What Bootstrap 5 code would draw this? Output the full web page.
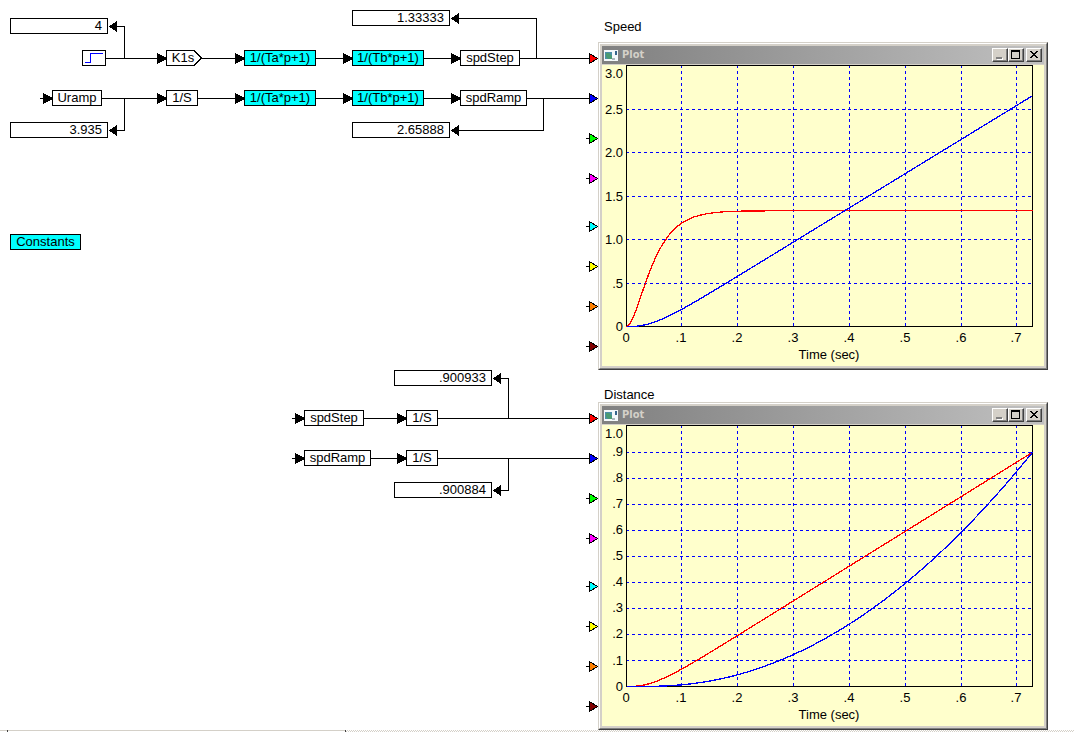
<!DOCTYPE html>
<html lang="en">
<head>
<meta charset="utf-8">
<meta name="viewport" content="width=device-width, initial-scale=1">
<title>Block diagram</title>
<link href="https://cdn.jsdelivr.net/npm/bootstrap@5.3.0/dist/css/bootstrap.min.css" rel="stylesheet">
<style>
  body { font-family: "Liberation Sans", Arial, sans-serif; font-size: 13px; line-height: 14px; color: #000; background: #fff; }
  .board { min-height: 730px; }
  .wires { top: 0; left: 0; pointer-events: none; shape-rendering: crispEdges; }
  .wires .line { fill: none; stroke: #000; }
  .wires .port { stroke: #000; }

  /* diagram nodes, placed on the canvas */
  .node { position: absolute; height: 16px; border: 1px solid #000; background: #fff; text-align: center; white-space: nowrap; }
  .compound { background: #0ff; }
  .readout { width: 98px; padding-right: 5px; text-align: right; }
  .gain { border-color: transparent; background: none; padding-right: 2px; }
  .caption { position: absolute; left: 604px; margin: 0; font-size: 13px; line-height: 16px; font-weight: 400; }
  .scope { position: absolute; left: 598px; width: 450px; }

  .x-a { left: 10px; } .x-step { left: 82px; } .x-uramp { left: 52px; } .x-b { left: 166px; }
  .x-c { left: 244px; } .x-d { left: 352px; } .x-e { left: 460px; }
  .x-f { left: 304px; } .x-g { left: 406px; } .x-h { left: 394px; }
  .y-1 { top: 10px; } .y-2 { top: 18px; } .y-3 { top: 50px; } .y-4 { top: 90px; } .y-5 { top: 122px; }
  .y-6 { top: 234px; } .y-7 { top: 370px; } .y-8 { top: 410px; } .y-9 { top: 450px; } .y-10 { top: 482px; }
  .cap-1 { top: 19px; } .cap-2 { top: 387px; }
  .scope-1 { top: 42px; } .scope-2 { top: 402px; }
  .w-24 { width: 24px; } .w-32 { width: 32px; } .w-36 { width: 36px; } .w-50px { width: 50px; }
  .w-60 { width: 60px; } .w-67 { width: 67px; } .w-72 { width: 72px; } .w-71 { width: 71px; }

  /* plot windows */
  .frame-outer { border: 1px solid; border-color: #d4d0c8 #404040 #404040 #d4d0c8; }
  .frame-inner { border: 1px solid; border-color: #fff #808080 #808080 #fff; background: #d4d0c8; padding: 2px; }
  .titlebar { height: 18px; margin-bottom: 1px; padding: 0 2px; background: linear-gradient(90deg, #808080, #c0c0c0); }
  .titlebar span { font-family: "DejaVu Sans Condensed", "DejaVu Sans", sans-serif; font-size: 11px; font-weight: 700; color: #d4d0c8; }
  .winbtn { width: 16px; height: 14px; padding: 0; border: 1px solid; border-color: #fff #404040 #404040 #fff; border-radius: 0; background: #d4d0c8; box-shadow: inset -1px -1px #808080; line-height: 0; display: block; }
  .winbtn-close { margin-left: 2px; }
  .winbtn svg, .plot { display: block; }
  .plot { background: #ffc; width: 100%; height: auto; }
  .plot text { font-size: 13px; fill: #000; }
  .plot path { shape-rendering: crispEdges; fill: none; }
  .grid-lines { stroke: #00f; stroke-dasharray: 3 3; }
  .plot-frame { stroke: #000; }
  .trace-a { stroke: #f00; stroke-width: 1.3; }
  .trace-b { stroke: #00f; stroke-width: 1.3; }

  /* scroll strip under the canvas */
  .strip { height: 2px; }
  .thumb { width: 346px; border-top: 1px solid #d4d0c8; }
  .tick { width: 1px; height: 2px; margin-top: -1px; background: #404040; }
  .thumb .tick:first-child { margin-left: 7px; }
  .track { background: repeating-conic-gradient(#d4d0c8 0 25%, #fff 0 50%) 0 0 / 2px 2px; }
</style>
<script src="https://cdn.jsdelivr.net/npm/bootstrap@5.3.0/dist/js/bootstrap.bundle.min.js"></script>
</head>
<body class="d-flex flex-column min-vh-100">

<main class="board position-relative flex-grow-1">
  <svg class="wires position-absolute" width="600" height="730" viewBox="0 0 600 730" aria-hidden="true">
    <defs>
      <path id="right" d="M0 0h1v1h2v1h2v1h2v1h2v1h1v1h-1v1h-2v1h-2v1h-2v1h-2v1h-1z"/>
      <path id="left" d="M8 0v11h-1v-1h-1v-1h-2v-1h-1v-1h-2v-1h-1v-1h1v-1h2v-1h1v-1h2v-1h1v-1z"/>
      <path id="port" d="M.5 .5L8.500 5.500L.5 10.500z"/>
    </defs>
    <g class="line">
      <path d="M106 58.500H160M124.500 58V26.500H116M202 58.500H238M316 58.500H346M424 58.500H454M520 58.500H589M536.500 58V18.500H458"/>
      <path d="M40 98.500H46M102 98.500H160M124.500 98V130.500H116M198 98.500H238M316 98.500H346M424 98.500H454M527 98.500H589M543.500 98V130.500H458"/>
      <path d="M292 418.500H298M364 418.500H400M438 418.500H589M508.500 418V378.500H500"/>
      <path d="M292 458.500H298M371 458.500H400M438 458.500H589M508.500 458V490.500H500"/>
      <path d="M586 138.500h3M586 178.500h3M586 226.500h3M586 266.500h3M586 306.500h3M586 346.500h3M586 498.500h3M586 538.500h3M586 586.500h3M586 626.500h3M586 666.500h3M586 706.500h3"/>
      <path fill="#fff" d="M166.500 50.500H194L201.500 58L194 65.500H166.500z"/>
    </g>
    <g>
      <use href="#right" x="157" y="53"/><use href="#right" x="235" y="53"/><use href="#right" x="343" y="53"/><use href="#right" x="451" y="53"/>
      <use href="#right" x="43" y="93"/><use href="#right" x="157" y="93"/><use href="#right" x="235" y="93"/><use href="#right" x="343" y="93"/><use href="#right" x="451" y="93"/>
      <use href="#right" x="295" y="413"/><use href="#right" x="397" y="413"/><use href="#right" x="295" y="453"/><use href="#right" x="397" y="453"/>
      <use href="#left" x="109" y="21"/><use href="#left" x="109" y="125"/><use href="#left" x="451" y="13"/><use href="#left" x="451" y="125"/>
      <use href="#left" x="493" y="373"/><use href="#left" x="493" y="485"/>
    </g>
    <g class="port" id="ports">
      <use href="#port" x="589" y="53" fill="#f00"/><use href="#port" x="589" y="93" fill="#00f"/>
      <use href="#port" x="589" y="133" fill="#0f0"/><use href="#port" x="589" y="173" fill="#f0f"/>
      <use href="#port" x="589" y="221" fill="#0ff"/><use href="#port" x="589" y="261" fill="#ff0"/>
      <use href="#port" x="589" y="301" fill="#ff8000"/><use href="#port" x="589" y="341" fill="#800000"/>
    </g>
    <use class="port" href="#ports" y="360"/>
  </svg>

  <output class="node readout x-a y-2">4</output>
  <div class="node w-24 x-step y-3">
    <svg class="d-block" width="22" height="14" viewBox="0 0 22 14" shape-rendering="crispEdges" aria-label="Step input"><path d="M2 11.500h5.500v-9H20" fill="none" stroke="#00f"/></svg>
  </div>
  <div class="node gain w-36 x-b y-3">K1s</div>
  <div class="node compound w-72 x-c y-3">1/(Ta*p+1)</div>
  <div class="node compound w-72 x-d y-3">1/(Tb*p+1)</div>
  <output class="node readout x-d y-1">1.33333</output>
  <div class="node w-60 x-e y-3">spdStep</div>

  <div class="node w-50px x-uramp y-4">Uramp</div>
  <div class="node w-32 x-b y-4">1/S</div>
  <div class="node compound w-72 x-c y-4">1/(Ta*p+1)</div>
  <div class="node compound w-72 x-d y-4">1/(Tb*p+1)</div>
  <div class="node w-67 x-e y-4">spdRamp</div>
  <output class="node readout x-a y-5">3.935</output>
  <output class="node readout x-d y-5">2.65888</output>

  <div class="node compound w-71 x-a y-6">Constants</div>

  <output class="node readout x-h y-7">.900933</output>
  <div class="node w-60 x-f y-8">spdStep</div>
  <div class="node w-32 x-g y-8">1/S</div>
  <div class="node w-67 x-f y-9">spdRamp</div>
  <div class="node w-32 x-g y-9">1/S</div>
  <output class="node readout x-h y-10">.900884</output>

  <h2 class="caption cap-1">Speed</h2>
  <section class="scope scope-1 frame-outer"><div class="frame-inner">
    <header class="titlebar d-flex align-items-center">
      <svg class="me-1" width="14" height="11" viewBox="0 0 14 11" aria-hidden="true"><path fill="#f4f8fa" d="M0 0h14v11H0z"/><path fill="#4b8fa8" d="M1 2h7v7H1z"/><path fill="#4a9a72" d="M2 3h3l3 3v3H4L2 7z"/><path fill="#35658c" d="M11 1h2v4h-2z"/><path fill="#aab7bd" d="M8 8h3v2H8z"/></svg>
      <span>Plot</span>
      <div class="d-flex ms-auto">
        <button type="button" class="winbtn" aria-label="Minimize"><svg width="14" height="12"><path fill="#fff" d="M4 9h6v2H4z"/><path fill="#808080" d="M3 8h6v2H3z"/></svg></button>
        <button type="button" class="winbtn" aria-label="Maximize"><svg width="14" height="12"><path fill-rule="evenodd" d="M2 1h9v9H2zM3 3v6h7V3z"/></svg></button>
        <button type="button" class="winbtn winbtn-close" aria-label="Close"><svg width="14" height="12" shape-rendering="crispEdges"><path d="M3 2h2v1h1v1h2V3h1V2h2v1h-1v1H9v1H8v1h1v1h1v1h1v1H9V8H8V7H6v1H5v1H3V8h1V7h1V6h1V5H5V4H4V3H3z"/></svg></button>
      </div>
    </header>
    <svg class="plot" viewBox="0 0 442 301" aria-label="Speed against time">
      <path class="grid-lines" d="M24 44.500h406M24 87.500h406M24 131.500h406M24 174.500h406M24 218.500h406M79.500 0v261M135.500 0v261M191.500 0v261M247.500 0v261M303.500 0v261M359.500 0v261M414.500 0v261"/>
      <path class="plot-frame" d="M24.500 .5h406v261h-406z"/>
      <path id="speedStep" class="trace-a"/><path id="speedRamp" class="trace-b"/>
      <g text-anchor="end">
        <text x="21" y="13">3.0</text><text x="21" y="49">2.5</text><text x="21" y="92">2.0</text><text x="21" y="136">1.5</text><text x="21" y="179">1.0</text><text x="21" y="223">.5</text><text x="21" y="266">0</text>
      </g>
      <g text-anchor="middle">
        <text x="24" y="277">0</text><text x="79" y="277">.1</text><text x="135" y="277">.2</text><text x="191" y="277">.3</text><text x="247" y="277">.4</text><text x="303" y="277">.5</text><text x="359" y="277">.6</text><text x="414" y="277">.7</text>
        <text x="227" y="294">Time (sec)</text>
      </g>
    </svg>
  </div></section>

  <h2 class="caption cap-2">Distance</h2>
  <section class="scope scope-2 frame-outer"><div class="frame-inner">
    <header class="titlebar d-flex align-items-center">
      <svg class="me-1" width="14" height="11" viewBox="0 0 14 11" aria-hidden="true"><path fill="#f4f8fa" d="M0 0h14v11H0z"/><path fill="#4b8fa8" d="M1 2h7v7H1z"/><path fill="#4a9a72" d="M2 3h3l3 3v3H4L2 7z"/><path fill="#35658c" d="M11 1h2v4h-2z"/><path fill="#aab7bd" d="M8 8h3v2H8z"/></svg>
      <span>Plot</span>
      <div class="d-flex ms-auto">
        <button type="button" class="winbtn" aria-label="Minimize"><svg width="14" height="12"><path fill="#fff" d="M4 9h6v2H4z"/><path fill="#808080" d="M3 8h6v2H3z"/></svg></button>
        <button type="button" class="winbtn" aria-label="Maximize"><svg width="14" height="12"><path fill-rule="evenodd" d="M2 1h9v9H2zM3 3v6h7V3z"/></svg></button>
        <button type="button" class="winbtn winbtn-close" aria-label="Close"><svg width="14" height="12" shape-rendering="crispEdges"><path d="M3 2h2v1h1v1h2V3h1V2h2v1h-1v1H9v1H8v1h1v1h1v1h1v1H9V8H8V7H6v1H5v1H3V8h1V7h1V6h1V5H5V4H4V3H3z"/></svg></button>
      </div>
    </header>
    <svg class="plot" viewBox="0 0 442 301" aria-label="Distance against time">
      <path class="grid-lines" d="M24 27.500h406M24 53.500h406M24 79.500h406M24 105.500h406M24 131.500h406M24 157.500h406M24 183.500h406M24 209.500h406M24 235.500h406M79.500 0v261M135.500 0v261M191.500 0v261M247.500 0v261M303.500 0v261M359.500 0v261M414.500 0v261"/>
      <path class="plot-frame" d="M24.500 .5h406v261h-406z"/>
      <path id="distStep" class="trace-a"/><path id="distRamp" class="trace-b"/>
      <g text-anchor="end">
        <text x="21" y="13">1.0</text><text x="21" y="31">.9</text><text x="21" y="57">.8</text><text x="21" y="83">.7</text><text x="21" y="109">.6</text><text x="21" y="135">.5</text><text x="21" y="161">.4</text><text x="21" y="187">.3</text><text x="21" y="213">.2</text><text x="21" y="240">.1</text><text x="21" y="266">0</text>
      </g>
      <g text-anchor="middle">
        <text x="24" y="277">0</text><text x="79" y="277">.1</text><text x="135" y="277">.2</text><text x="191" y="277">.3</text><text x="247" y="277">.4</text><text x="303" y="277">.5</text><text x="359" y="277">.6</text><text x="414" y="277">.7</text>
        <text x="227" y="294">Time (sec)</text>
      </g>
    </svg>
  </div></section>
</main>

<footer class="strip d-flex">
  <div class="thumb d-flex justify-content-between"><div class="tick"></div><div class="tick"></div></div>
  <div class="track flex-grow-1"></div>
</footer>

<script>
  // Responses of two equal first-order lags in series (time constant T)
  const T = 0.026, end = 0.7276, gain = 4 / 3, slope = 3.935;
  const e = t => Math.exp(-t / T);
  const curves = {
    speedStep: [86.8, t => gain * (1 - (1 + t / T) * e(t))],
    speedRamp: [86.8, t => slope * (t - 2 * T + (t + 2 * T) * e(t))],
    distStep: [260, t => gain * (t - 2 * T + (t + 2 * T) * e(t))],
    distRamp: [260, t => slope * (t * t / 2 - 2 * T * t + 3 * T * T - (T * t + 3 * T * T) * e(t))]
  };
  for (const [id, [scale, f]] of Object.entries(curves)) {
    let d = "";
    for (let i = 0; i <= 203; i++) {
      const t = end * i / 203;
      d += (i ? "L" : "M") + (24.5 + 2 * i) + " " + (261.5 - scale * f(t)).toFixed(1);
    }
    document.getElementById(id).setAttribute("d", d);
  }
</script>
</body>
</html>
